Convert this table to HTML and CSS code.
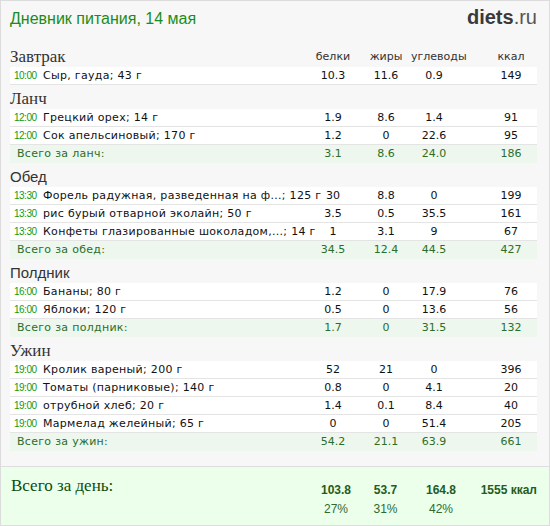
FILE: index.html
```html
<!DOCTYPE html>
<html lang="ru">
<head>
<meta charset="utf-8">
<title>Дневник питания</title>
<link rel="stylesheet" href="styles.css">
</head>
<body>
<div class="diary">
  <div class="top">
    <h1 class="title">Дневник питания, 14 мая</h1>
    <div class="logo"><b>diets</b>.ru</div>
  </div>

  <div class="meal">
    <div class="head">
      <div class="meal-name serif">Завтрак</div>
      <div class="lbl">белки</div><div class="lbl">жиры</div><div class="lbl">углеводы</div><div class="lbl kc">ккал</div>
    </div>
    <div class="row"><div class="name"><span class="time">10:00</span>Сыр, гауда; 43 г</div><div>10.3</div><div>11.6</div><div>0.9</div><div class="kc">149</div></div>
  </div>

  <div class="meal">
    <div class="head"><div class="meal-name serif">Ланч</div></div>
    <div class="row"><div class="name"><span class="time">12:00</span>Грецкий орех; 14 г</div><div>1.9</div><div>8.6</div><div>1.4</div><div class="kc">91</div></div>
    <div class="row"><div class="name"><span class="time">12:00</span>Сок апельсиновый; 170 г</div><div>1.2</div><div>0</div><div>22.6</div><div class="kc">95</div></div>
    <div class="row total"><div class="name">Всего за ланч:</div><div>3.1</div><div>8.6</div><div>24.0</div><div class="kc">186</div></div>
  </div>

  <div class="meal">
    <div class="head"><div class="meal-name sans">Обед</div></div>
    <div class="row"><div class="name"><span class="time">13:30</span>Форель радужная, разведенная на ф...; 125 г</div><div>30</div><div>8.8</div><div>0</div><div class="kc">199</div></div>
    <div class="row"><div class="name"><span class="time">13:30</span>рис бурый отварной эколайн; 50 г</div><div>3.5</div><div>0.5</div><div>35.5</div><div class="kc">161</div></div>
    <div class="row"><div class="name"><span class="time">13:30</span>Конфеты глазированные шоколадом,...; 14 г</div><div>1</div><div>3.1</div><div>9</div><div class="kc">67</div></div>
    <div class="row total"><div class="name">Всего за обед:</div><div>34.5</div><div>12.4</div><div>44.5</div><div class="kc">427</div></div>
  </div>

  <div class="meal">
    <div class="head"><div class="meal-name sans">Полдник</div></div>
    <div class="row"><div class="name"><span class="time">16:00</span>Бананы; 80 г</div><div>1.2</div><div>0</div><div>17.9</div><div class="kc">76</div></div>
    <div class="row"><div class="name"><span class="time">16:00</span>Яблоки; 120 г</div><div>0.5</div><div>0</div><div>13.6</div><div class="kc">56</div></div>
    <div class="row total"><div class="name">Всего за полдник:</div><div>1.7</div><div>0</div><div>31.5</div><div class="kc">132</div></div>
  </div>

  <div class="meal">
    <div class="head"><div class="meal-name serif">Ужин</div></div>
    <div class="row"><div class="name"><span class="time">19:00</span>Кролик вареный; 200 г</div><div>52</div><div>21</div><div>0</div><div class="kc">396</div></div>
    <div class="row"><div class="name"><span class="time">19:00</span>Томаты (парниковые); 140 г</div><div>0.8</div><div>0</div><div>4.1</div><div class="kc">20</div></div>
    <div class="row"><div class="name"><span class="time">19:00</span>отрубной хлеб; 20 г</div><div>1.4</div><div>0.1</div><div>8.4</div><div class="kc">40</div></div>
    <div class="row"><div class="name"><span class="time">19:00</span>Мармелад желейный; 65 г</div><div>0</div><div>0</div><div>51.4</div><div class="kc">205</div></div>
    <div class="row total"><div class="name">Всего за ужин:</div><div>54.2</div><div>21.1</div><div>63.9</div><div class="kc">661</div></div>
  </div>

  <div class="day">
    <div class="day-name">Всего за день:</div>
    <div class="num">103.8</div><div class="num">53.7</div><div class="num">164.8</div><div class="num kcal">1555 ккал</div>
    <div class="pct">27%</div><div class="pct">31%</div><div class="pct">42%</div>
  </div>
</div>
</body>
</html>
```

FILE: styles.css
```css
html, body {
  margin: 0;
  padding: 0;
  background: #ffffff;
}

.diary {
  width: 548px;
  height: 524px;
  border: 1px solid #dcdcdc;
  background: #f7f7f7;
  display: flex;
  flex-direction: column;
  overflow: hidden;
}

.top {
  display: flex;
  justify-content: space-between;
  align-items: baseline;
  padding: 5px 12px 13px 9px;
}

.title {
  margin: 0;
  font-family: "Liberation Sans", Arial, sans-serif;
  font-weight: normal;
  font-size: 16px;
  line-height: 22px;
  color: #1a8c1a;
}

.logo {
  font-family: "Liberation Sans", Arial, sans-serif;
  font-size: 20px;
  line-height: 22px;
  color: #555555;
}

.logo b {
  color: #3a3a3a;
  font-weight: bold;
}

.meal {
  padding: 0 12px 0 9px;
}

.head,
.row {
  display: grid;
  grid-template-columns: minmax(0, 1fr) 56px 50px 46px 80px;
}

.head {
  height: 24px;
  align-items: end;
}

.meal-name {
  align-self: start;
  padding-top: 5px;
  line-height: 18px;
  color: #333333;
  white-space: nowrap;
}

.meal-name.serif {
  font-family: "Liberation Serif", "Times New Roman", serif;
  font-size: 17px;
}

.meal-name.sans {
  font-family: "Liberation Sans", Arial, sans-serif;
  font-size: 15px;
}

.lbl {
  font-family: "DejaVu Sans", Verdana, sans-serif;
  font-size: 11px;
  line-height: 15px;
  padding-bottom: 3px;
  text-align: center;
  color: #333333;
}

.lbl.kc,
.row .kc {
  padding-left: 28px;
}

.row {
  height: 17px;
  border-bottom: 1px solid #e4e4e4;
  background: #ffffff;
  font-family: "DejaVu Sans", Verdana, sans-serif;
  font-size: 11px;
  line-height: 17px;
  color: #111111;
}

.row > div {
  text-align: center;
  white-space: nowrap;
}

.row > .name {
  text-align: left;
  padding-left: 4px;
  letter-spacing: 0.3px;
  overflow: visible;
}

.time {
  display: inline-block;
  width: 22px;
  margin-right: 7px;
  font-family: "Liberation Sans", Arial, sans-serif;
  font-size: 10px;
  letter-spacing: -0.5px;
  color: #0f9a0f;
}

.row.total {
  border-bottom: none;
  height: 18px;
  background: #edf7ed;
  color: #2b6e2b;
}

.row.total > .name {
  padding-left: 7px;
}

.day {
  margin-top: 15px;
  border-top: 1px solid #dedede;
  flex: 1;
  background: #ebffeb;
  display: grid;
  grid-template-columns: minmax(0, 1fr) 52px 47px 64px 64px;
  grid-template-rows: 22px 16px;
  row-gap: 3px;
  padding: 9px 12px 0 10px;
  align-content: start;
}

.day-name {
  grid-row: 1 / 3;
  font-family: "Liberation Serif", "Times New Roman", serif;
  font-size: 17px;
  line-height: 20px;
  color: #0b4d0b;
}

.num {
  padding-top: 6px;
  font-family: "Liberation Sans", Arial, sans-serif;
  font-weight: bold;
  font-size: 12px;
  line-height: 16px;
  color: #235c23;
  text-align: center;
  white-space: nowrap;
}

.num.kcal {
  text-align: right;
}

.pct {
  font-family: "Liberation Sans", Arial, sans-serif;
  font-size: 12px;
  line-height: 16px;
  color: #2f6a2f;
  text-align: center;
}
```
